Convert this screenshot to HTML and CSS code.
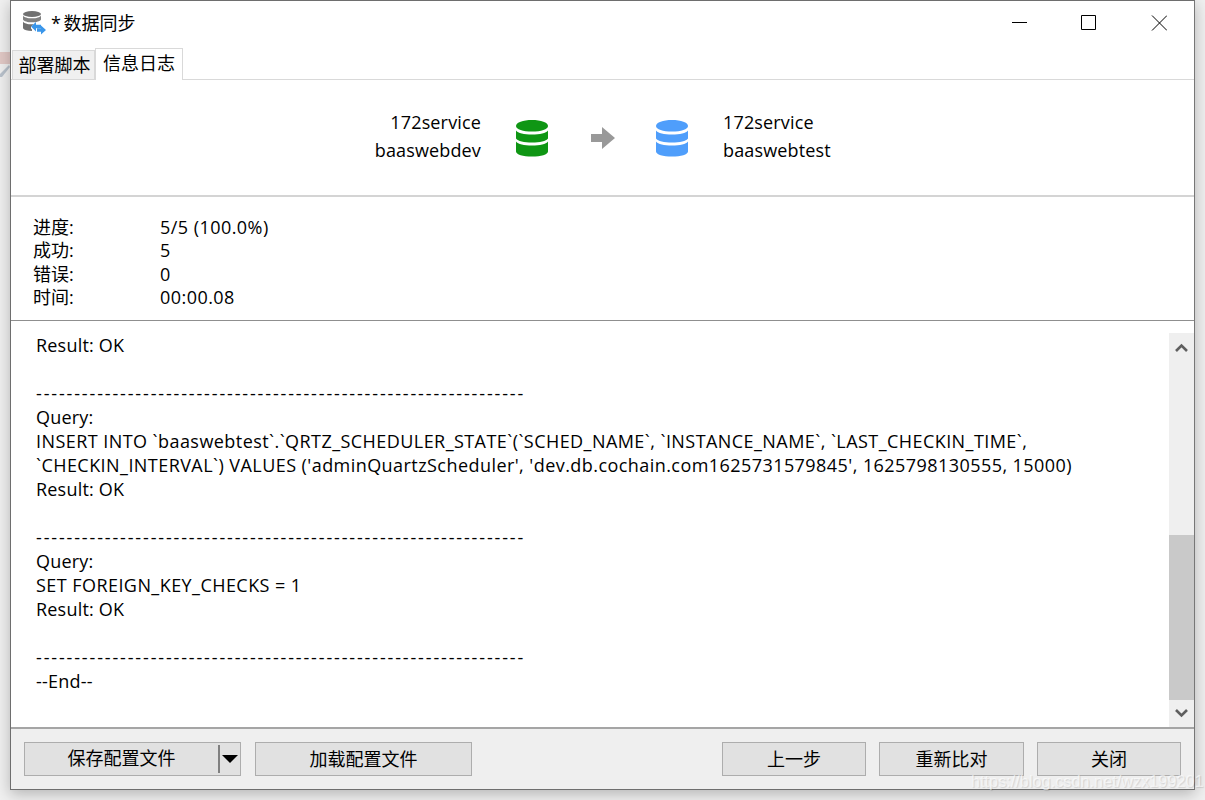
FILE: index.html
```html
<!DOCTYPE html>
<html lang="zh-CN">
<head>
<meta charset="utf-8">
<title>数据同步</title>
<link rel="stylesheet" href="styles.css">
</head>
<body>
<svg class="behind" width="10" height="30" viewBox="0 0 10 30">
  <path d="M0 2h10v12H0z" fill="#e2c9c6"/>
  <path d="M0 24l9-9 1 2-8 10H0z" fill="#b9c2cc"/>
</svg>
<div class="desktop">
  <div class="window">
    <header class="titlebar">
      <svg class="app-icon" width="24" height="24" viewBox="0 0 24 24">
        <ellipse cx="9" cy="3" rx="9" ry="3" fill="#707070"/>
        <path d="M0 4.500c1 1.900 4.500 2.800 9 2.800s8-.9 9-2.800v4c-1 1.900-4.500 2.800-9 2.800s-8-.9-9-2.800z" fill="#808080"/>
        <path d="M0 10.500c1 1.900 4.500 2.800 9 2.800 .6 0 1.200 0 1.800-.1L8 15.500v2.100l1 .9v1.500c-4.500 0-8-.9-9-2.700z" fill="#707070"/>
        <path d="M8 15.500l5-4.500v2.800h5v3.400h-5V20.500z" fill="#3a96ea"/>
        <path d="M23 19l-5-4.500v2.800h-4v3.400h4V23.500z" fill="#3a96ea"/>
      </svg>
      <span class="title">* 数据同步</span>
      <div class="controls">
        <svg width="16" height="16" viewBox="0 0 16 16"><path d="M1 7.500h15" stroke="#000" fill="none"/></svg>
        <svg width="16" height="16" viewBox="0 0 16 16"><path d="M.5 .5h14v14H.5z" stroke="#000" fill="none"/></svg>
        <svg width="16" height="16" viewBox="0 0 16 16"><path d="M1 .5l15 15M16 .5l-15 15" stroke="#000" fill="none"/></svg>
      </div>
    </header>
    <nav class="tabs">
      <div class="tab">部署脚本</div>
      <div class="tab active">信息日志</div>
    </nav>
    <section class="sync">
      <div class="conn right"><div>172service</div><div>baaswebdev</div></div>
      <svg class="db" width="34" height="38" viewBox="0 0 34 38">
        <path d="M1 7c0-3.500 7-6 16-6s16 2.500 16 6-7 5.500-16 5.500S1 10.500 1 7z" fill="#0f9614"/>
        <path d="M1 11.500c2 2.600 8 4 16 4s14-1.400 16-4v8c-2 2.600-8 4-16 4s-14-1.400-16-4z" fill="#0f9614"/>
        <path d="M1 22.500c2 2.600 8 4 16 4s14-1.400 16-4v10c0 3-7 5-16 5s-16-2-16-5z" fill="#0f9614"/>
      </svg>
      <svg class="arrow" width="24" height="22" viewBox="0 0 24 22"><path d="M0 7h11V0l13 11-13 11v-7H0z" fill="#999"/></svg>
      <svg class="db" width="34" height="38" viewBox="0 0 34 38">
        <path d="M1 7c0-3.500 7-6 16-6s16 2.500 16 6-7 5.500-16 5.500S1 10.500 1 7z" fill="#4f9efb"/>
        <path d="M1 11.500c2 2.600 8 4 16 4s14-1.400 16-4v8c-2 2.600-8 4-16 4s-14-1.400-16-4z" fill="#4f9efb"/>
        <path d="M1 22.500c2 2.600 8 4 16 4s14-1.400 16-4v10c0 3-7 5-16 5s-16-2-16-5z" fill="#4f9efb"/>
      </svg>
      <div class="conn"><div>172service</div><div>baaswebtest</div></div>
    </section>
    <section class="stats">
      <div>进度:</div><div class="value">5/5 (100.0%)</div>
      <div>成功:</div><div class="value">5</div>
      <div>错误:</div><div class="value">0</div>
      <div>时间:</div><div class="value">00:00.08</div>
    </section>
    <section class="log">
      <div class="log-text">Result: OK

<span class="dashes">----------------------------------------------------------------</span>
Query:
<span class="long">INSERT INTO `baaswebtest`.`QRTZ_SCHEDULER_STATE`(`SCHED_NAME`, `INSTANCE_NAME`, `LAST_CHECKIN_TIME`,
`CHECKIN_INTERVAL`) VALUES ('adminQuartzScheduler', 'dev.db.cochain.com1625731579845', 1625798130555, 15000)</span>
Result: OK

<span class="dashes">----------------------------------------------------------------</span>
Query:
<span class="long">SET FOREIGN_KEY_CHECKS = 1</span>
Result: OK

<span class="dashes">----------------------------------------------------------------</span>
--End--</div>
      <div class="scrollbar">
        <svg class="sb-btn" width="25" height="28" viewBox="0 0 25 28"><path d="M7 18l5.500-5.500L18 18" stroke="#5f5f5f" stroke-width="2.600" fill="none"/></svg>
        <div class="sb-track"><div class="sb-thumb"></div></div>
        <svg class="sb-btn" width="25" height="27" viewBox="0 0 25 27"><path d="M7 10l5.500 5.500L18 10" stroke="#5f5f5f" stroke-width="2.600" fill="none"/></svg>
      </div>
    </section>
    <footer class="footer">
      <div class="btn split"><span class="split-label">保存配置文件</span><span class="split-arrow"></span></div>
      <div class="btn load">加载配置文件</div>
      <div class="spacer"></div>
      <div class="nav-group">
        <div class="btn nav">上一步</div>
        <div class="btn nav">重新比对</div>
        <div class="btn nav">关闭</div>
      </div>
    </footer>
  </div>
</div>
<div class="watermark">https://blog.csdn.net/wzx199201</div>
</body>
</html>
```
FILE: styles.css
```css
* { box-sizing: border-box; }
html, body { margin: 0; height: 100%; overflow: hidden; }
body {
  background: #f0f0f0;
  font-family: "Open Sans", "Noto Sans CJK SC", sans-serif;
  font-size: 18px;
  color: #000;
  position: relative;
}
.behind { position: absolute; left: 0; top: 50px; }
.desktop { padding: 0 10px 10px; height: 800px; position: relative; }
.window {
  height: 790px;
  background: #fff;
  border: 1px solid #6e6e6e;
  border-right-color: #777;
  box-shadow: 0 4px 14px rgba(0,0,0,.25);
  display: flex;
  flex-direction: column;
}
.titlebar { height: 46px; display: flex; align-items: center; padding: 0 27px 3px 12px; flex: none; }
.app-icon { margin-right: 4px; }
.title { flex: 1; line-height: 24px; word-spacing: -2px; }
.controls { display: flex; gap: 54px; }
.tabs { height: 33px; display: flex; align-items: flex-end; border-bottom: 1px solid #d9d9d9; flex: none; padding-left: 1px; }
.tab {
  width: 83px; height: 29px; line-height: 28px; text-align: center; padding-left: 2px;
  background: #f0f0f0; border: 1px solid #d9d9d9; border-bottom: none;
}
.tab.active { background: #fff; width: 88px; height: 32px; margin-bottom: -1px; line-height: 28px; padding-left: 0; }
.sync {
  height: 117px; flex: none; display: flex; justify-content: center; align-items: center;
  border-bottom: 2px solid #d4d4d4; padding-right: 1px;
}
.conn { line-height: 28px; width: 130px; margin-bottom: 4px; letter-spacing: .15px; }
.conn.right { text-align: right; }
.db { margin: 0 0 0 34px; }
.db + .arrow { margin: 0 40px 0 42px; }
.arrow + .db { margin: 0 34px 0 0; }
.stats {
  height: 124px; flex: none; display: grid; grid-template-columns: 127px 1fr; grid-auto-rows: 23.400px;
  padding: 19px 0 0 22px; border-bottom: 1px solid #8f8f8f; line-height: 23px;
}
.value { letter-spacing: .45px; }
.log { flex: 1; min-height: 0; display: flex; padding: 12px 0 0 25px; border-bottom: 2px solid #a5a5a5; }
.log-text { flex: 1; white-space: pre; line-height: 24px; letter-spacing: .2px; }
.long { letter-spacing: .44px; }
.dashes { letter-spacing: 1.850px; }
.scrollbar { width: 25px; display: flex; flex-direction: column; background: #efefef; flex: none; }
.sb-btn { flex: none; }
.sb-track { flex: 1; display: flex; flex-direction: column; justify-content: flex-end; }
.sb-thumb { height: 165px; background: #c9c9c9; }
.footer { height: 60px; flex: none; background: #efefef; display: flex; align-items: flex-start; padding: 13px 13px 0 13px; gap: 14px; line-height: 26px; }
.btn {
  height: 34px; border: 1px solid #adadad; background: #e1e1e1; display: flex;
  align-items: center; justify-content: center; padding-bottom: 1px;
}
.split { width: 217px; justify-content: flex-start; padding-bottom: 0; }
.split-label { width: 195px; text-align: center; border-right: 2px solid #808080; line-height: 27px; height: 28px; }
.split-arrow { width: 0; height: 0; border-left: 8px solid transparent; border-right: 8px solid transparent; border-top: 8px solid #000; margin-left: 2px; }
.load { width: 217px; }
.spacer { flex: 1; }
.nav-group { display: flex; gap: 13px; }
.nav { width: 144px; }
.nav:nth-child(2) { width: 145px; }
.watermark {
  position: absolute; left: 971px; top: 771px; font-family: "Liberation Sans", sans-serif; font-size: 16.300px; line-height: 20px;
  color: rgba(255,255,255,.6); text-shadow: 1px 1px 1px rgba(0,0,0,.12); white-space: nowrap;
}
```
